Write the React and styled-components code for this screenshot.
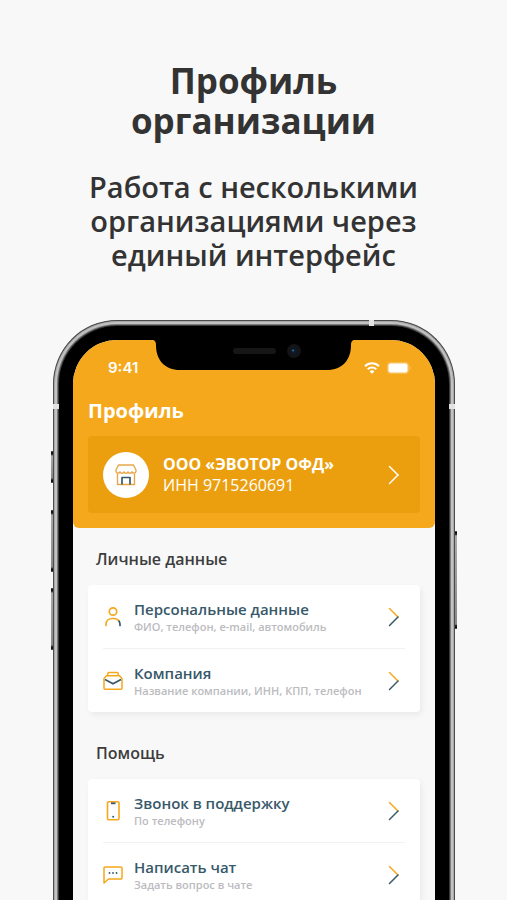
import React from 'react'
import styled, { createGlobalStyle } from 'styled-components'

const GlobalStyle = createGlobalStyle`
  * {
    box-sizing: border-box;
  }
  body {
    margin: 0;
    background: #f8f8f8;
    font-family: "Open Sans", "Noto Sans", sans-serif;
  }
  h1, h2, p, ul {
    margin: 0;
    padding: 0;
  }
`

const amber = '#f5a81c'
const teal = '#37596a'

const Page = styled.main`
  height: 100vh;
  display: flex;
  flex-direction: column;
  overflow: hidden;
`

const Intro = styled.header`
  padding: 61px 24px 48px;
  text-align: center;
  color: #333;
`

const Title = styled.h1`
  max-width: 300px;
  margin: 0 auto 29px;
  font-size: 35px;
  line-height: 40px;
  font-weight: 700;
`

const Lead = styled.p`
  max-width: 360px;
  margin: 0 auto;
  font-size: 29px;
  line-height: 34px;
  font-weight: 600;
`

const Phone = styled.div`
  position: relative;
  flex: 1 0 auto;
  margin: 0 52px 0 53px;
  padding: 5px 5px 0;
  border: 1px solid #4c4c4c;
  border-bottom: 0;
  border-radius: 64px 64px 0 0;
  background: #3a3a3a;
  box-shadow: inset 0 0 0 1px #a8a8a8, inset 0 0 0 3px #c2c2c2, inset 0 0 0 4px #7c7c7c;
`

const SideKey = styled.span`
  position: absolute;
  top: ${(p) => p.$top}px;
  ${(p) => p.$side}: -3px;
  width: 2px;
  height: ${(p) => p.$height}px;
  border-radius: 1px;
  background: linear-gradient(#111, #111 3px, #aaa 5px, #888 calc(100% - 5px), #111 calc(100% - 3px), #111);
`

const Antenna = styled.span`
  position: absolute;
  background: #e2e2e2;
  ${(p) => (p.$side === 'top'
    ? 'top: -1px; right: 80px; width: 5px; height: 6px;'
    : `top: 83px; ${p.$side}: -1px; width: 6px; height: 5px;`)}
`

const Bezel = styled.div`
  height: 100%;
  padding: 14px 14px 0;
  border-radius: 58px 58px 0 0;
  background: #000;
`

const Screen = styled.div`
  position: relative;
  height: 100%;
  border-radius: 44px 44px 0 0;
  background: #f8f8f8;
  overflow: hidden;
`

const Notch = styled.svg`
  position: absolute;
  top: 0;
  left: 50%;
  margin-left: -102px;
`

const Top = styled.div`
  padding: 0 15px 15px;
  border-radius: 0 0 6px 6px;
  background: ${amber};
  color: #fff;
`

const StatusBar = styled.div`
  display: flex;
  justify-content: space-between;
  align-items: center;
  height: 56px;
  padding: 0 9px 0 20px;
  font: 600 15px/20px Inter, sans-serif;
`

const StatusIcons = styled.div`
  display: flex;
  align-items: center;
  gap: 7px;
`

const ScreenTitle = styled.h2`
  padding-bottom: 10px;
  font-size: 20px;
  line-height: 30px;
  font-weight: 700;
`

const OrgCard = styled.button`
  display: flex;
  align-items: center;
  gap: 14px;
  width: 100%;
  height: 77px;
  padding: 0 15px;
  border: 0;
  border-radius: 4px;
  background: #eb9f0f;
  color: #fff;
  font: inherit;
  text-align: left;
`

const Avatar = styled.span`
  display: grid;
  place-items: center;
  width: 46px;
  height: 46px;
  border-radius: 50%;
  background: #fff;
`

const Texts = styled.span`
  flex: 1;
  display: flex;
  flex-direction: column;
  white-space: nowrap;
`

const OrgName = styled.span`
  font-size: 16px;
  line-height: 21px;
  font-weight: 700;
`

const OrgInn = styled.span`
  font-size: 16px;
  line-height: 21px;
`

const Section = styled.section`
  padding: 20px 15px 10px;
`

const SectionTitle = styled.h2`
  padding: 0 8px 15px;
  color: #3d3d3d;
  font-size: 16px;
  line-height: 22px;
  font-weight: 600;
`

const List = styled.ul`
  padding: 0 15px;
  list-style: none;
  border-radius: 4px;
  background: #fff;
  box-shadow: 2px 3px 6px rgba(0, 0, 0, 0.06);
`

const Item = styled.li`
  & + & {
    border-top: 1px solid #f1f1f1;
  }
`

const Row = styled.button`
  display: flex;
  align-items: center;
  gap: 11px;
  width: 100%;
  height: 63px;
  padding: 0;
  border: 0;
  background: none;
  font: inherit;
  text-align: left;
`

const RowTitle = styled.span`
  color: ${teal};
  font-size: 15px;
  line-height: 20px;
  font-weight: 600;
`

const RowNote = styled.span`
  color: #bbbbc0;
  font-size: 11px;
  line-height: 16px;
  font-weight: 600;
`

const Chevron = ({ top = amber, bottom = teal }) => (
  <svg width="22" height="20" viewBox="0 0 22 20" fill="none" strokeWidth="1.5" strokeLinecap="round">
    <path d="M6.5 1.5L15 10" stroke={top} />
    <path d="M15 10L6.5 18.5" stroke={bottom} />
  </svg>
)

const ShopIcon = () => (
  <svg width="24" height="24" viewBox="0 0 24 24" fill="none" stroke="#e8a64a" strokeWidth="1.4" strokeLinejoin="round">
    <path d="M4.5 2h15l2.500 5v1.200a2.100 2.100 0 0 1-4 .7 2.200 2.200 0 0 1-4 0 2.200 2.200 0 0 1-4 0 2.200 2.200 0 0 1-4 0 2.100 2.100 0 0 1-4-.7V7z" />
    <path d="M3.500 10.500v11h17v-11" />
    <path d="M8 21.500V14.500h8v7" stroke={teal} strokeWidth="1.700" />
  </svg>
)

const PersonIcon = () => (
  <svg width="20" height="22" viewBox="0 0 20 22" fill="none" stroke={amber} strokeWidth="1.700" strokeLinecap="round">
    <circle cx="10" cy="5.500" r="3.700" />
    <path d="M3 19.500v-1c0-3.600 2.600-6 6.500-6h1c2.500 0 4.500 1 5.600 2.700" />
    <path d="M16.100 15.200c.7 1 .9 2.100.9 3.300v1" stroke={teal} />
  </svg>
)

const CompanyIcon = () => (
  <svg width="20" height="22" viewBox="0 0 20 22" fill="none" stroke={amber} strokeWidth="1.500" strokeLinejoin="round">
    <path d="M1 8.500L3.500 5.800h13L19 8.500v9.700a1 1 0 0 1-1 1H2a1 1 0 0 1-1-1z" />
    <path d="M4.800 5.800V3.600a1 1 0 0 1 1-1h8.400a1 1 0 0 1 1 1v2.200" />
    <path d="M2 9.500l8 4.300 8-4.300" stroke={teal} strokeWidth="1.800" />
  </svg>
)

const CallIcon = () => (
  <svg width="20" height="22" viewBox="0 0 20 22" fill="none" stroke={amber} strokeWidth="1.600">
    <rect x="4.500" y="1.800" width="11.500" height="18" rx="1.200" />
    <path d="M8 3.300h4.500" stroke={teal} strokeWidth="1.800" />
    <circle cx="10.200" cy="16.800" r="1" fill={teal} stroke="none" />
  </svg>
)

const ChatIcon = () => (
  <svg width="20" height="22" viewBox="0 0 20 22" fill="none" stroke={amber} strokeWidth="1.500" strokeLinejoin="round">
    <path d="M2.200 3h15.600a1.200 1.200 0 0 1 1.200 1.200v9.600a1.200 1.200 0 0 1-1.200 1.200H5.500L1 19V4.200a1.200 1.200 0 0 1 1.200-1.200z" />
    <g fill={teal} stroke="none">
      <circle cx="6.500" cy="9" r="0.900" />
      <circle cx="10" cy="9" r="0.900" />
      <circle cx="13.500" cy="9" r="0.900" />
    </g>
  </svg>
)

const WifiIcon = () => (
  <svg width="16" height="12" viewBox="0 0 16 12" fill="none" stroke="#fff" strokeWidth="2">
    <path d="M1 4.200a10 10 0 0 1 14 0" />
    <path d="M3.700 7.200a6.100 6.100 0 0 1 8.600 0" />
    <path d="M8 11.800L5.600 9.400a3.400 3.400 0 0 1 4.800 0z" fill="#fff" stroke="none" />
  </svg>
)

const BatteryIcon = () => (
  <svg width="24" height="12" viewBox="0 0 24 12">
    <rect x="0.500" y="0.500" width="21" height="11" rx="3" fill="#fff" stroke="#fff" opacity="0.250" />
    <rect x="1.500" y="1.500" width="19" height="9" rx="2" fill="#fff" />
    <path d="M22.500 4v4c1-.5 1.400-1.200 1.400-2s-.4-1.500-1.400-2z" fill="#fff" opacity="0.300" />
  </svg>
)

const sections = [
  {
    title: 'Личные данные',
    items: [
      { icon: <PersonIcon />, title: 'Персональные данные', note: 'ФИО, телефон, e-mail, автомобиль' },
      { icon: <CompanyIcon />, title: 'Компания', note: 'Название компании, ИНН, КПП, телефон' },
    ],
  },
  {
    title: 'Помощь',
    items: [
      { icon: <CallIcon />, title: 'Звонок в поддержку', note: 'По телефону' },
      { icon: <ChatIcon />, title: 'Написать чат', note: 'Задать вопрос в чате' },
    ],
  },
]

const App = () => {
  return (
    <>
      <GlobalStyle />
      <Page>
        <Intro>
          <Title>Профиль организации</Title>
          <Lead>Работа с несколькими организациями через единый интерфейс</Lead>
        </Intro>
        <Phone>
          <SideKey $side="left" $top={130} $height={32} />
          <SideKey $side="left" $top={189} $height={62} />
          <SideKey $side="left" $top={267} $height={62} />
          <SideKey $side="right" $top={210} $height={98} />
          <Antenna $side="top" />
          <Antenna $side="left" />
          <Antenna $side="right" />
          <Bezel>
            <Screen>
              <Top>
                <StatusBar>
                  <span>9:41</span>
                  <StatusIcons>
                    <WifiIcon />
                    <BatteryIcon />
                  </StatusIcons>
                </StatusBar>
                <ScreenTitle>Профиль</ScreenTitle>
                <OrgCard type="button">
                  <Avatar><ShopIcon /></Avatar>
                  <Texts>
                    <OrgName>ООО «ЭВОТОР ОФД»</OrgName>
                    <OrgInn>ИНН 9715260691</OrgInn>
                  </Texts>
                  <Chevron top="#fff" bottom="#fff" />
                </OrgCard>
              </Top>
              {sections.map((section) => (
                <Section key={section.title}>
                  <SectionTitle>{section.title}</SectionTitle>
                  <List>
                    {section.items.map((item) => (
                      <Item key={item.title}>
                        <Row type="button">
                          {item.icon}
                          <Texts>
                            <RowTitle>{item.title}</RowTitle>
                            <RowNote>{item.note}</RowNote>
                          </Texts>
                          <Chevron />
                        </Row>
                      </Item>
                    ))}
                  </List>
                </Section>
              ))}
              <Notch width="203" height="30" viewBox="0 0 203 30">
                <path d="M0 0c3 0 4 2 4 5 0 15 9 25 24 25h147c15 0 24-10 24-25 0-3 1-5 4-5z" fill="#000" />
                <rect x="81" y="8" width="43" height="6" rx="3" fill="#161616" />
                <circle cx="142" cy="11" r="7" fill="#121416" />
                <circle cx="142" cy="11" r="3" fill="#0c1c2c" />
                <circle cx="141" cy="10.500" r="1" fill="#3b6f96" />
              </Notch>
            </Screen>
          </Bezel>
        </Phone>
      </Page>
    </>
  )
}

export default App
